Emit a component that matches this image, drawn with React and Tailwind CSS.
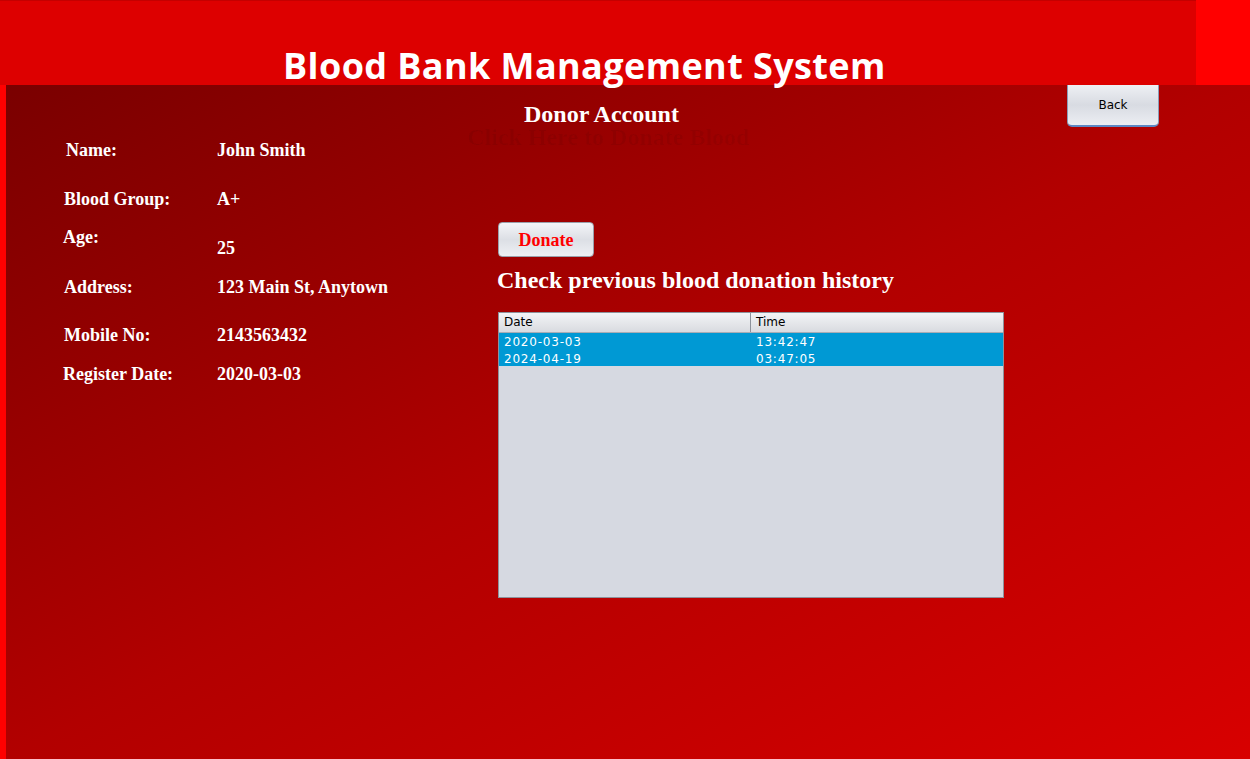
import React from "react";

const DETAILS = [
  { label: "Name:", value: "John Smith", mt: "mt-[54px]", lx: "pl-[2px]" },
  { label: "Blood Group:", value: "A+", mt: "mt-[27px]" },
  { label: "Age:", value: "25", mt: "mt-[16px]", lx: "-ml-[1px]", drop: true },
  { label: "Address:", value: "123 Main St, Anytown", mt: "mt-[17px]" },
  { label: "Mobile No:", value: "2143563432", mt: "mt-[26px]" },
  { label: "Register Date:", value: "2020-03-03", mt: "mt-[17px]", lx: "-ml-[1px]" },
];

const HISTORY = [
  ["2020-03-03", "13:42:47"],
  ["2024-04-19", "03:47:05"],
];

const serif = "font-['Liberation_Serif',serif]";

export default function App() {
  return (
    <div className="w-[1250px] h-[759px] bg-[#ff0000] flex flex-col overflow-hidden">
      {/* title bar */}
      <div className="relative z-10 h-[85px] w-[1196px] shrink-0 bg-[#dd0000] border-t border-[#c40000] flex items-end pl-[283px]">
        <h1 className="text-white font-['Open_Sans',sans-serif] font-bold text-[36px] leading-[38px] tracking-[0.4px]">
          Blood Bank Management System
        </h1>
      </div>

      <div className="relative ml-[6px] flex-1 flex bg-linear-to-br from-[#7a0000] via-[#b20000] to-[#d80000]">
        {/* donor details */}
        <div className={`w-[454px] shrink-0 flex flex-col pl-[58px] text-white font-bold text-[18px] leading-[22px] ${serif}`}>
          {DETAILS.map((d) => (
            <div key={d.label} className={`grid grid-cols-[153px_1fr] ${d.mt}`}>
              <span className={d.lx}>{d.label}</span>
              <span className={d.drop ? "mt-[11px]" : ""}>{d.value}</span>
            </div>
          ))}
        </div>

        {/* donation area */}
        <div className={`flex flex-col ${serif}`}>
          <h2 className="mt-[15px] ml-[64px] text-white font-bold text-[24px] leading-[28px]">
            Donor Account
          </h2>
          <p className="mt-[-4px] ml-[7px] text-black/[0.06] font-bold text-[24px] leading-[26px]">
            Click Here to Donate Blood
          </p>

          <button className="mt-[72px] ml-[38px] w-[96px] h-[35px] rounded-[4px] border border-[#9aa0ab] bg-linear-to-b from-[#f4f5f8] via-[#dcdfe5] to-[#eef0f4] text-[#ff0000] font-bold text-[18px] leading-none">
            Donate
          </button>

          <h3 className="mt-[9px] ml-[37px] text-white font-bold text-[24px] leading-[28px] whitespace-nowrap">
            Check previous blood donation history
          </h3>

          <div className="mt-[18px] ml-[38px] w-[506px] h-[286px] border border-[#8d929b] bg-[#d6d9e1] font-['DejaVu_Sans',sans-serif] text-[12px]">
            <div className="grid grid-cols-[252px_1fr] h-[20px] bg-linear-to-b from-[#f3f4f6] to-[#d9dbe0] border-b border-[#a9adb5] text-black">
              <div className="pl-[5px] leading-[19px] border-r border-[#8d929b]">Date</div>
              <div className="pl-[5px] leading-[19px]">Time</div>
            </div>
            {HISTORY.map(([date, time]) => (
              <div key={date} className="grid grid-cols-[252px_1fr] h-[16.5px] bg-[#0099d4] text-white leading-[19px] tracking-[0.8px]">
                <div className="pl-[5px]">{date}</div>
                <div className="pl-[5px]">{time}</div>
              </div>
            ))}
          </div>
        </div>

        {/* back button (sits under the title bar) */}
        <button className="absolute left-[1061px] top-0 w-[92px] h-[42px] rounded-b-[5px] border-x border-b-2 border-x-[#8b9db8] border-b-[#5d88c4] bg-linear-to-b from-[#eef0f4] via-[#d8dbe2] to-[#eceef3] text-black font-['DejaVu_Sans',sans-serif] text-[12px] leading-none">
          Back
        </button>
      </div>
    </div>
  );
}
